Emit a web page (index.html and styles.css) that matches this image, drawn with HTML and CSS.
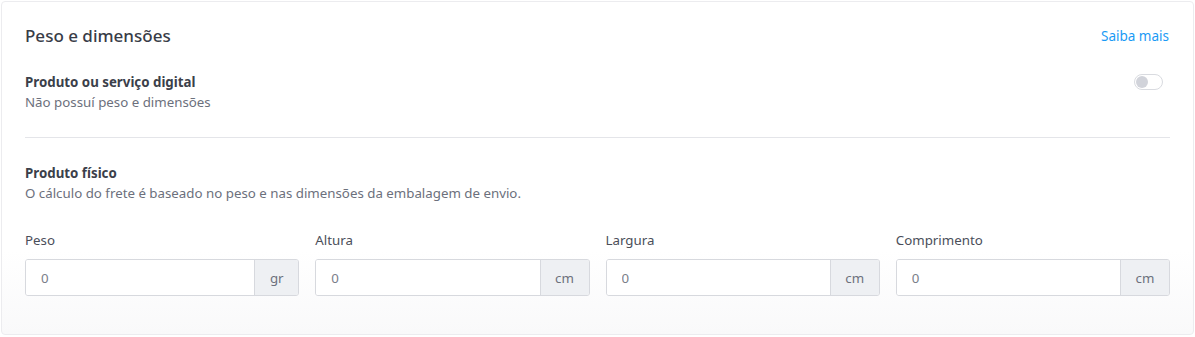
FILE: index.html
```html
<!DOCTYPE html>
<html lang="pt-BR">
<head>
    <meta charset="UTF-8">
    <title>Peso e dimensões</title>
    <link rel="stylesheet" href="styles.css">
</head>
<body>
    <div class="card">
        <div class="card-header">
            <h2 class="card-title">Peso e dimensões</h2>
            <a class="link" href="#">Saiba mais</a>
        </div>

        <div class="option-row">
            <div>
                <div class="option-title">Produto ou serviço digital</div>
                <div class="option-desc">Não possuí peso e dimensões</div>
            </div>
            <span class="toggle"><span class="toggle-knob"></span></span>
        </div>

        <hr class="divider">

        <div class="option-title">Produto físico</div>
        <div class="option-desc">O cálculo do frete é baseado no peso e nas dimensões da embalagem de envio.</div>

        <div class="fields">
            <div class="field">
                <label class="field-label">Peso</label>
                <div class="input-group">
                    <input class="input" type="text" value="0">
                    <span class="addon addon-gr">gr</span>
                </div>
            </div>
            <div class="field">
                <label class="field-label">Altura</label>
                <div class="input-group">
                    <input class="input" type="text" value="0">
                    <span class="addon">cm</span>
                </div>
            </div>
            <div class="field">
                <label class="field-label">Largura</label>
                <div class="input-group">
                    <input class="input" type="text" value="0">
                    <span class="addon">cm</span>
                </div>
            </div>
            <div class="field">
                <label class="field-label">Comprimento</label>
                <div class="input-group">
                    <input class="input" type="text" value="0">
                    <span class="addon">cm</span>
                </div>
            </div>
        </div>
    </div>
</body>
</html>
```

FILE: styles.css
```css
body {
    margin: 0;
    padding: 1px 1px 0 1px;
    font-family: "Noto Sans", Arial, sans-serif;
    background: #ffffff;
    color: #3b3f4a;
}
.card {
    background: linear-gradient(to bottom, #ffffff 75%, #f9f9fa 100%);
    border: 1px solid #ececef;
    border-radius: 4px;
    padding: 21px 23px 39px 23px;
    height: 334px;
    box-sizing: border-box;
}
.card-header {
    display: flex;
    justify-content: space-between;
    align-items: center;
}
.card-title {
    margin: 0;
    font-size: 17px;
    font-weight: 500;
    line-height: 26px;
    color: #383c47;
}
.link {
    color: #1a9af5;
    text-decoration: none;
    font-size: 13.5px;
    margin-right: 1px;
}
.option-row {
    display: flex;
    justify-content: space-between;
    align-items: flex-start;
    margin-top: 23px;
}
.option-title {
    font-size: 13.3px;
    font-weight: 700;
    line-height: 20px;
    color: #3b3f4a;
}
.option-desc {
    font-size: 13.3px;
    line-height: 20px;
    color: #6c707c;
}
.toggle {
    position: relative;
    display: block;
    width: 27px;
    height: 14px;
    border: 1px solid #d9dbe0;
    border-radius: 9px;
    margin: 2px 7px 0 0;
}
.toggle-knob {
    position: absolute;
    left: 1px;
    top: 1px;
    width: 12px;
    height: 12px;
    border-radius: 50%;
    background: #d1d3da;
}
.divider {
    border: none;
    border-top: 1px solid #e4e5e9;
    margin: 25px 0 25px;
}
.fields {
    display: grid;
    grid-template-columns: repeat(4, minmax(0, 1fr));
    gap: 16px;
    margin-top: 27px;
}
.field-label {
    display: block;
    font-size: 13.3px;
    line-height: 20px;
    color: #4a4e59;
    margin-bottom: 9px;
}
.input-group {
    display: flex;
    height: 37px;
    border: 1px solid #d7d9de;
    border-radius: 3px;
    box-sizing: border-box;
    overflow: hidden;
}
.input {
    flex: 1;
    min-width: 0;
    border: none;
    padding: 0 15px;
    font-family: inherit;
    font-size: 13.3px;
    color: #7a7e89;
    outline: none;
}
.addon {
    display: flex;
    align-items: center;
    justify-content: center;
    width: 48px;
    background: #eef0f3;
    border-left: 1px solid #d7d9de;
    font-size: 13.3px;
    color: #6c707c;
}
.addon-gr {
    width: 43px;
}
```
